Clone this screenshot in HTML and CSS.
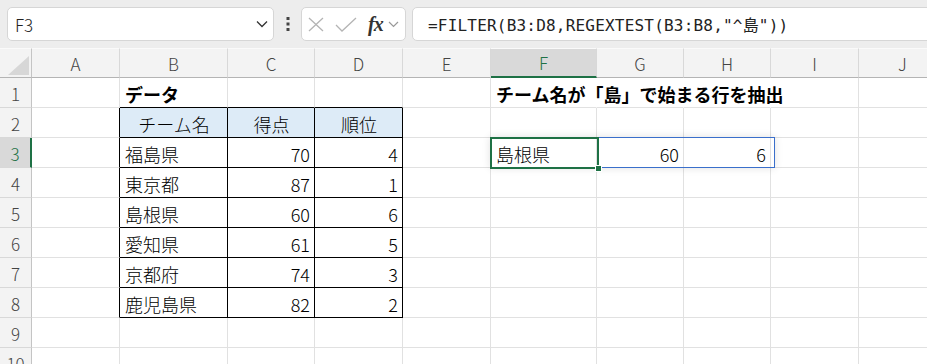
FILE: index.html
```html
<!DOCTYPE html>
<html lang="ja">
<head>
    <meta charset="UTF-8" />
    <title>Sheet</title>
    <link rel="stylesheet" href="styles.css">
</head>
<body>
<div class="bar">
    <div class="namebox">
        <span>F3</span>
        <svg class="chev" width="12" height="8" viewBox="0 0 12 8"><path d="M1 1.5 L6 6.5 L11 1.5" fill="none" stroke="#333" stroke-width="1.3"/></svg>
    </div>
    <div class="grip">
        <svg width="4" height="14" viewBox="0 0 4 14"><rect x="0.5" y="0" width="3" height="3" fill="#444"/><rect x="0.5" y="5.5" width="3" height="3" fill="#444"/><rect x="0.5" y="11" width="3" height="3" fill="#444"/></svg>
    </div>
    <div class="fxbox">
        <svg width="16" height="15" viewBox="0 0 16 15"><path d="M1 1 L15 14 M15 1 L1 14" stroke="#b4b4b4" stroke-width="1.3"/></svg>
        <svg class="ok" width="22" height="15" viewBox="0 0 22 15"><path d="M1 8 L7 14 L21 1" fill="none" stroke="#b4b4b4" stroke-width="1.3"/></svg>
        <span class="fx">fx</span>
        <svg width="11" height="7" viewBox="0 0 11 7"><path d="M1 1 L5.5 5.5 L10 1" fill="none" stroke="#999" stroke-width="1.2"/></svg>
    </div>
    <div class="formula">=FILTER(B3:D8,REGEXTEST(B3:B8,"^島"))</div>
</div>

<div class="sheetwrap">
    <div class="sheet" id="sheet"></div>
    <div class="spill"></div>
    <div class="active"></div>
    <div class="handle"></div>
</div>

<script>
    const cols = ["A", "B", "C", "D", "E", "F", "G", "H", "I", "J"];
    const data = {
      1: { B: "データ", F: "チーム名が「島」で始まる行を抽出" },
      2: { B: "チーム名", C: "得点", D: "順位" },
      3: { B: "福島県", C: 70, D: 4, F: "島根県", G: 60, H: 6 },
      4: { B: "東京都", C: 87, D: 1 },
      5: { B: "島根県", C: 60, D: 6 },
      6: { B: "愛知県", C: 61, D: 5 },
      7: { B: "京都府", C: 74, D: 3 },
      8: { B: "鹿児島県", C: 82, D: 2 }
    };

    const sheet = document.getElementById("sheet");
    let html = `<div class="corner"><div class="tri"></div></div>`;
    cols.forEach(c => {
      html += `<div class="colhead${c === "F" ? " sel" : ""}">${c}</div>`;
    });

    for (let r = 1; r <= 10; r++) {
      html += `<div class="rowhead${r === 3 ? " sel" : ""}">${r}</div>`;
      cols.forEach(c => {
        const v = data[r] && data[r][c] !== undefined ? data[r][c] : "";
        const cls = ["cell"];
        const inTable = r >= 2 && r <= 8 && "BCD".includes(c);
        if (inTable) cls.push("tb");
        if (r >= 2 && r <= 8 && c === "A") cls.push("tl");
        if (r === 1 && "BCD".includes(c)) cls.push("tt");
        if (r === 2 && inTable) cls.push("th");
        if (r === 1) cls.push("bold");
        if (r === 1 && "FGH".includes(c)) cls.push("over");
        if (typeof v === "number") cls.push("num");
        html += `<div class="${cls.join(" ")}">${v}</div>`;
      });
    }
    sheet.innerHTML = html;
</script>
</body>
</html>
```

FILE: styles.css
```css
body {
  margin: 0;
  background: #ffffff;
  font-family: "Noto Sans CJK JP", "Noto Sans", sans-serif;
  color: #000;
  overflow: hidden;
}

.bar {
  display: flex;
  align-items: center;
  height: 48px;
  background: #ededed;
  padding-left: 7px;
  box-sizing: border-box;
}
.namebox {
  width: 267px;
  height: 34px;
  box-sizing: border-box;
  background: #fff;
  border: 1px solid #d6d6d6;
  border-radius: 5px;
  display: flex;
  align-items: center;
  justify-content: space-between;
  padding: 0 5px 0 7px;
  font-size: 17px;
  font-weight: 300;
  color: #222;
}
.grip {
  width: 27px;
  display: flex;
  justify-content: center;
  align-items: center;
}
.fxbox {
  width: 105px;
  height: 34px;
  box-sizing: border-box;
  background: #fff;
  border: 1px solid #d6d6d6;
  border-radius: 5px;
  display: flex;
  align-items: center;
  padding-left: 6px;
}
.fxbox .ok {
  margin-left: 11px;
}
.fx {
  font-family: "Liberation Serif", serif;
  font-style: italic;
  font-weight: bold;
  font-size: 20px;
  color: #333;
  margin-left: 11px;
  margin-right: 5px;
  letter-spacing: -1px;
}
.formula {
  flex: 1;
  height: 34px;
  box-sizing: border-box;
  margin-left: 6px;
  margin-right: -12px;
  background: #fff;
  border: 1px solid #d6d6d6;
  border-radius: 5px;
  display: flex;
  align-items: center;
  padding-left: 15px;
  font-family: "DejaVu Sans Mono", "Noto Sans CJK JP", monospace;
  font-size: 16px;
  letter-spacing: 0.2px;
  color: #222;
}

.sheetwrap {
  position: relative;
}
.sheet {
  display: grid;
  grid-template-columns: 32px 88px 108px 87px 88px 88px 106px 87px 87px 88px 88px;
  grid-template-rows: 30px;
  grid-auto-rows: 30px;
  font-size: 18px;
  font-weight: 300;
}
.corner {
  background: #f3f3f3;
  border-right: 1px solid #c4c4c4;
  border-bottom: 1px solid #b4b4b4;
  border-top: 1px solid #fafafa;
  position: relative;
}
.tri {
  position: absolute;
  left: 8px;
  top: 7px;
  width: 0;
  height: 0;
  border-left: 21px solid transparent;
  border-bottom: 19px solid #d7d7d7;
}
.colhead {
  background: #f3f3f3;
  border-right: 1px solid #d8d8d8;
  border-bottom: 1px solid #b4b4b4;
  border-top: 1px solid #fafafa;
  display: flex;
  align-items: center;
  justify-content: center;
  color: #444;
  font-size: 17px;
}
.colhead.sel {
  background: #d9d9d9;
  border-bottom: 2px solid #1e7145;
  color: #1e7145;
}
.rowhead {
  background: #f3f3f3;
  border-right: 1px solid #c4c4c4;
  border-bottom: 1px solid #d8d8d8;
  display: flex;
  align-items: center;
  justify-content: center;
  color: #444;
  font-size: 17px;
  padding-top: 2px;
  box-sizing: border-box;
}
.rowhead.sel {
  background: #d9d9d9;
  border-right: 2px solid #1e7145;
  color: #1e7145;
}
.cell {
  border-right: 1px solid #e1e1e1;
  border-bottom: 1px solid #e1e1e1;
  display: flex;
  align-items: center;
  padding: 2px 4px 0 5px;
  white-space: nowrap;
  overflow: visible;
  min-width: 0;
}
.cell.bold {
  font-weight: bold;
}
.cell.over {
  border-right-color: transparent;
}
.cell.num {
  justify-content: flex-end;
}
.cell.tb {
  border-right-color: #000;
  border-bottom-color: #000;
}
.cell.tl {
  border-right-color: #000;
}
.cell.tt {
  border-bottom-color: #000;
}
.cell.th {
  background: #ddebf7;
  justify-content: center;
}

.spill {
  position: absolute;
  left: 490px;
  top: 89px;
  width: 285px;
  height: 31px;
  box-sizing: border-box;
  border: 1px solid #3a6fcb;
  box-shadow: 0 0 8px rgba(0, 0, 0, 0.12);
}
.active {
  position: absolute;
  left: 490px;
  top: 89px;
  width: 109px;
  height: 32px;
  box-sizing: border-box;
  border: 2px solid #1e7145;
}
.handle {
  position: absolute;
  left: 595px;
  top: 117px;
  width: 7px;
  height: 7px;
  box-sizing: border-box;
  background: #1e7145;
  border: 1px solid #fff;
}
```
